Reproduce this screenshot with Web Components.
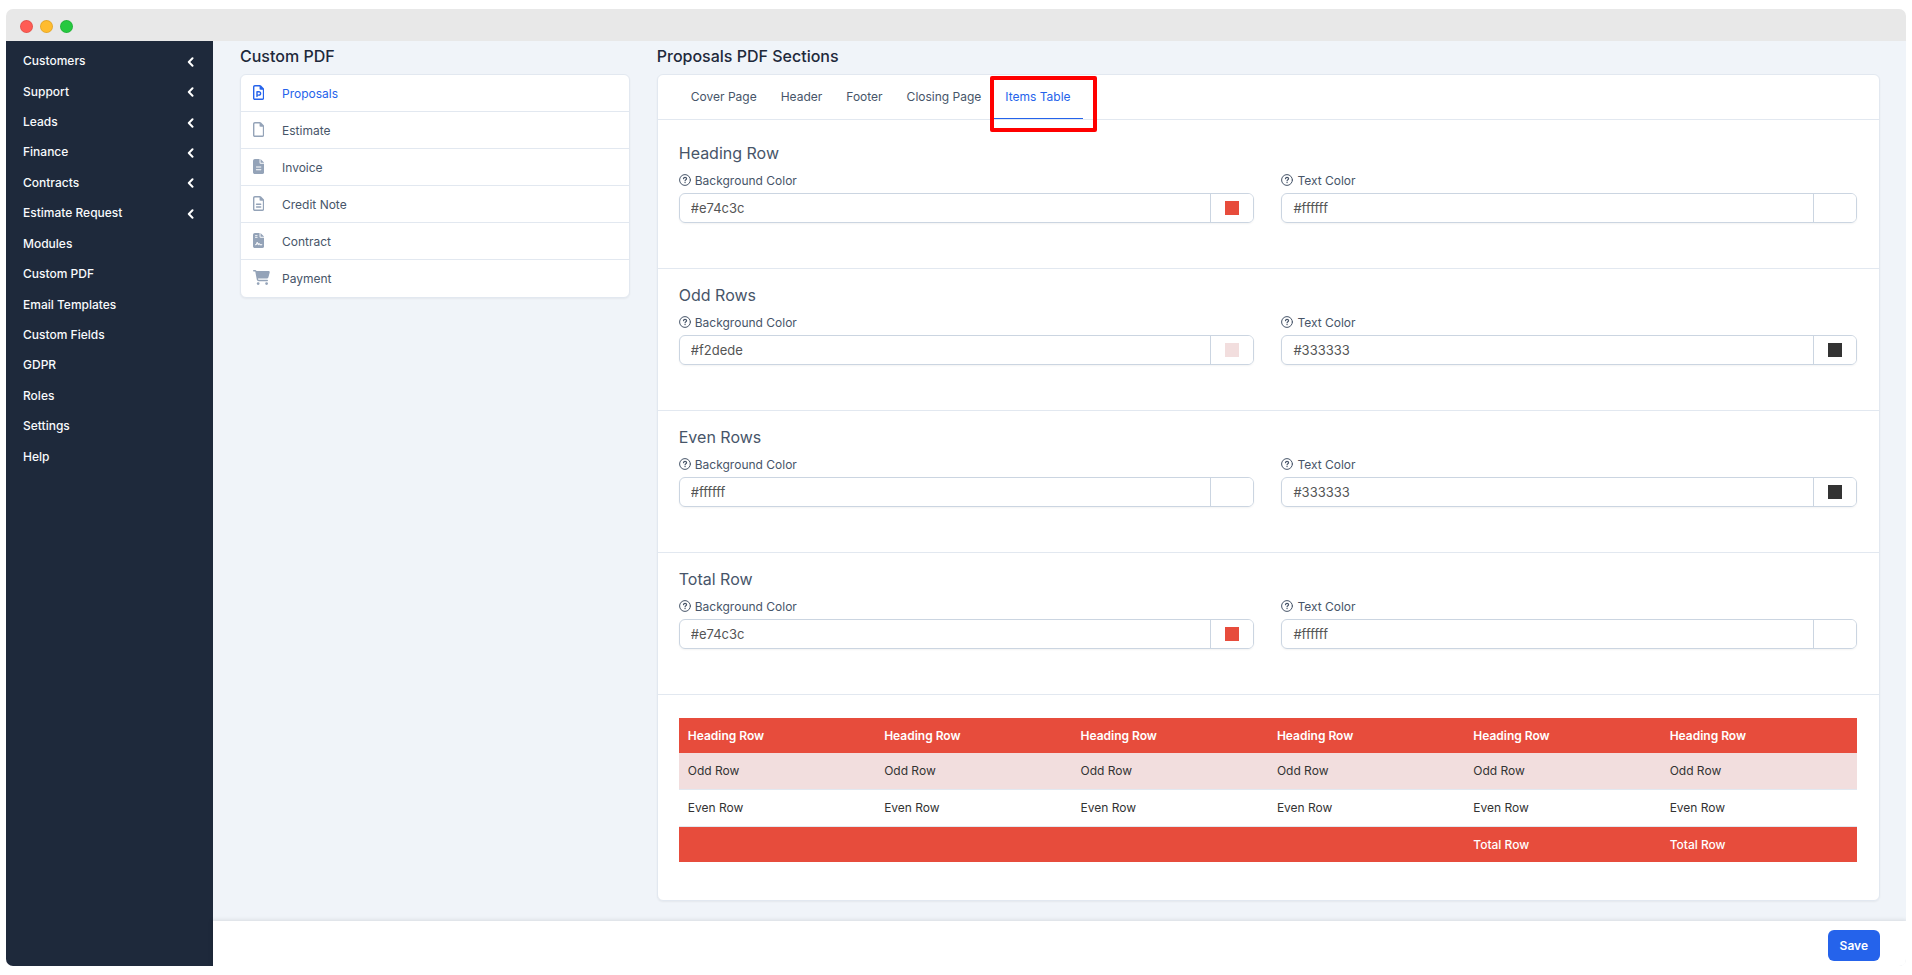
<!DOCTYPE html>
<html lang="en">
<head>
<meta charset="utf-8">
<meta name="viewport" content="width=device-width, initial-scale=1">
<title>Custom PDF</title>
<style>
    body {
        background-color: #fff;
        color: #475569;
        font-family: Inter, 'Open Sans', sans-serif;
        font-size: 12px;
        line-height: 16px;
        margin: 9px 6px;
    }
</style>
</head>
<body>

<app-window>
    <side-menu slot="side"></side-menu>
    <document-list></document-list>
    <pdf-sections></pdf-sections>
    <save-bar slot="bottom"></save-bar>
</app-window>

<script>
class AppWindow extends HTMLElement {

    constructor() {
        super();
        this.shadow = this.attachShadow({ mode: 'open' });
    }

    connectedCallback() {
        this.render();
    }

    render() {

        this.shadow.innerHTML =
        `
        <style>
            :host{
                border-radius: 7px;
                display: flex;
                flex-direction: column;
                min-height: calc(100vh - 18px);
                overflow: hidden;
            }

            header{
                align-items: center;
                background-color: #e8e8e8;
                box-sizing: border-box;
                display: flex;
                gap: 7px;
                height: 32px;
                padding: 2px 14px 0;
            }

            .dot{
                border: 1px solid rgba(0, 0, 0, 0.1);
                border-radius: 50%;
                box-sizing: border-box;
                height: 13px;
                width: 13px;
            }

            .close{ background-color: #ff5c54; }
            .minimize{ background-color: #ffbc2e; }
            .maximize{ background-color: #26c940; }

            .body{
                display: flex;
                flex: 1;
            }

            .content{
                background-color: #f0f4f9;
                display: flex;
                flex: 1;
                flex-direction: column;
                min-width: 0;
            }

            main{
                display: grid;
                flex: 1;
                align-items: start;
                gap: 27px;
                grid-template-columns: minmax(0, 1fr) minmax(0, 1fr) minmax(0, 1fr) minmax(0, 1fr);
                padding: 5px 26px 20px 27px;
            }
        </style>

        <header>
            <span class="dot close"></span>
            <span class="dot minimize"></span>
            <span class="dot maximize"></span>
        </header>
        <div class="body">
            <slot name="side"></slot>
            <div class="content">
                <main><slot></slot></main>
                <slot name="bottom"></slot>
            </div>
        </div>`;
    }
}

customElements.define('app-window', AppWindow);


class SideMenu extends HTMLElement {

    constructor() {
        super();
        this.shadow = this.attachShadow({ mode: 'open' });
        this.items = [
            { name: 'Customers', children: true },
            { name: 'Support', children: true },
            { name: 'Leads', children: true },
            { name: 'Finance', children: true },
            { name: 'Contracts', children: true },
            { name: 'Estimate Request', children: true },
            { name: 'Modules' },
            { name: 'Custom PDF' },
            { name: 'Email Templates' },
            { name: 'Custom Fields' },
            { name: 'GDPR' },
            { name: 'Roles' },
            { name: 'Settings' },
            { name: 'Help' }
        ];
    }

    connectedCallback() {
        this.render();
    }

    render() {

        let arrow = `<svg viewBox="0 0 7 10" aria-hidden="true"><path d="M5.5 1.2 1.8 5l3.7 3.8" /></svg>`;

        this.shadow.innerHTML =
        `
        <style>
            :host{
                background-color: #1e293b;
                box-sizing: border-box;
                display: block;
                flex: none;
                padding: 5px 0;
                width: 207px;
            }

            ul{
                display: grid;
                grid-auto-rows: 1fr;
                height: 426px;
                list-style: none;
                margin: 0;
                padding: 0;
            }

            li{
                display: grid;
            }

            a{
                align-items: center;
                color: #f8fafc;
                display: flex;
                font-weight: 500;
                justify-content: space-between;
                padding: 0 19px 0 17px;
                text-decoration: none;
            }

            svg{
                fill: none;
                height: 10px;
                margin-top: 1px;
                stroke: #fff;
                stroke-linecap: round;
                stroke-linejoin: round;
                stroke-width: 2;
                width: 7px;
            }
        </style>

        <nav>
            <ul>
                ${this.items.map(item => `<li><a href="#">${item.name}${item.children ? arrow : ''}</a></li>`).join('')}
            </ul>
        </nav>`;
    }
}

customElements.define('side-menu', SideMenu);


class DocumentList extends HTMLElement {

    constructor() {
        super();
        this.shadow = this.attachShadow({ mode: 'open' });

        let outline = 'M320 464c8.8 0 16-7.2 16-16V160H256c-17.7 0-32-14.3-32-32V48H64c-8.8 0-16 7.2-16 16V448c0 8.8 7.2 16 16 16H320zM0 64C0 28.7 28.7 0 64 0H229.5c17 0 33.3 6.7 45.3 18.7l90.5 90.5c12 12 18.7 28.3 18.7 45.3V448c0 35.3-28.7 64-64 64H64c-35.3 0-64-28.7-64-64V64z';
        let lines = 'M120 256H264c13.3 0 24 10.7 24 24s-10.7 24-24 24H120c-13.3 0-24-10.7-24-24s10.7-24 24-24zM120 352H264c13.3 0 24 10.7 24 24s-10.7 24-24 24H120c-13.3 0-24-10.7-24-24s10.7-24 24-24z';
        let solid = 'M64 0C28.7 0 0 28.7 0 64V448c0 35.3 28.7 64 64 64H320c35.3 0 64-28.7 64-64V160H256c-17.7 0-32-14.3-32-32V0H64zM256 0V128H384L256 0z';

        this.documents = [
            { name: 'Proposals', active: true, width: 384, path: outline + 'M136 208c-13.3 0-24 10.7-24 24V392c0 13.3 10.7 24 24 24s24-10.7 24-24V368h44c44.2 0 80-35.8 80-80s-35.8-80-80-80H136zm68 112H160V256h44c17.7 0 32 14.3 32 32s-14.3 32-32 32z' },
            { name: 'Estimate', width: 384, path: outline },
            { name: 'Invoice', width: 384, path: solid + 'M112 256H272c8.8 0 16 7.2 16 16s-7.2 16-16 16H112c-8.8 0-16-7.2-16-16s7.2-16 16-16zm0 96H272c8.8 0 16 7.2 16 16s-7.2 16-16 16H112c-8.8 0-16-7.2-16-16s7.2-16 16-16z' },
            { name: 'Credit Note', width: 384, path: outline + lines },
            { name: 'Contract', width: 384, path: solid + 'M80 64h64c8.8 0 16 7.2 16 16s-7.2 16-16 16H80c-8.8 0-16-7.2-16-16s7.2-16 16-16zm0 64h64c8.8 0 16 7.2 16 16s-7.2 16-16 16H80c-8.8 0-16-7.2-16-16s7.2-16 16-16zm54.2 253.8c-6.1 20.3-24.8 34.2-46 34.2H80c-8.8 0-16-7.2-16-16s7.2-16 16-16h8.2c7.1 0 13.3-4.6 15.3-11.4l14.9-49.5c3.4-11.3 13.8-19.1 25.6-19.1s22.2 7.8 25.6 19.1l11.6 38.6c7.4-6.2 16.8-9.7 26.8-9.7c15.9 0 30.4 9 37.5 23.2l4.4 8.8H304c8.8 0 16 7.2 16 16s-7.2 16-16 16H240c-6.1 0-11.6-3.4-14.3-8.8l-8.8-17.7c-1.7-3.4-5.1-5.5-8.8-5.5s-7.2 2.1-8.8 5.5l-8.8 17.7c-2.9 5.9-9.2 9.4-15.7 8.8s-12.1-5.1-13.9-11.3L144 349l-9.8 32.8z' },
            { name: 'Payment', width: 576, path: 'M0 24C0 10.7 10.7 0 24 0H69.5c22 0 41.5 12.8 50.6 32h411c26.3 0 45.5 25 38.6 50.4l-41 152.3c-8.5 31.4-37 53.3-69.5 53.3H170.7l5.4 28.5c2.2 11.3 12.1 19.5 23.6 19.5H488c13.3 0 24 10.7 24 24s-10.7 24-24 24H199.7c-34.6 0-64.3-24.6-70.7-58.5L77.4 54.5c-.7-3.8-4-6.5-7.9-6.5H24C10.7 48 0 37.3 0 24zM128 464a48 48 0 1 1 96 0 48 48 0 1 1-96 0zm336-48a48 48 0 1 1 0 96 48 48 0 1 1 0-96z' }
        ];
    }

    connectedCallback() {
        this.render();
    }

    render() {

        this.shadow.innerHTML =
        `
        <style>
            :host{
                display: block;
            }

            h4{
                color: #1e293b;
                font-size: 16px;
                font-weight: 500;
                line-height: 20px;
                margin: 0 0 8px;
            }

            ul{
                background-color: #fff;
                border: 1px solid #e2e8f0;
                border-radius: 6px;
                box-shadow: 0 1px 2px rgba(0, 0, 0, 0.05);
                list-style: none;
                margin: 0;
                padding: 0 0 1px;
            }

            li + li{
                border-top: 1px solid #e2e8f0;
            }

            a{
                align-items: center;
                box-sizing: border-box;
                color: #475569;
                display: flex;
                height: 36px;
                padding: 1px 12px 0;
                text-decoration: none;
            }

            a.active{
                color: #2563eb;
            }

            .icon{
                color: #94a3b8;
                display: flex;
                flex: none;
                margin-bottom: 2px;
                width: 29px;
            }

            .active .icon{
                color: #2563eb;
            }

            svg{
                fill: currentColor;
                fill-rule: evenodd;
                height: 15px;
            }
        </style>

        <h4>Custom PDF</h4>
        <ul>
            ${this.documents.map(item => `
            <li>
                <a href="#" class="${item.active ? 'active' : ''}">
                    <span class="icon"><svg viewBox="0 0 ${item.width} 512" aria-hidden="true"><path d="${item.path}" /></svg></span>
                    ${item.name}
                </a>
            </li>`).join('')}
        </ul>`;
    }
}

customElements.define('document-list', DocumentList);


class PdfSections extends HTMLElement {

    constructor() {
        super();
        this.shadow = this.attachShadow({ mode: 'open' });
        this.tabs = ['Cover Page', 'Header', 'Footer', 'Closing Page', 'Items Table'];
    }

    connectedCallback() {
        this.render();
    }

    render() {

        this.shadow.innerHTML =
        `
        <style>
            :host{
                display: block;
                grid-column: span 3;
            }

            h4{
                color: #1e293b;
                font-size: 16px;
                font-weight: 500;
                line-height: 20px;
                margin: 0 0 8px;
            }

            .panel{
                background-color: #fff;
                border: 1px solid #e2e8f0;
                border-radius: 6px;
                box-shadow: 0 1px 2px rgba(0, 0, 0, 0.05);
            }

            nav{
                border-bottom: 1px solid #e2e8f0;
                display: flex;
                padding: 0 21px;
            }

            nav a{
                border-bottom: 1px solid transparent;
                box-sizing: border-box;
                color: #475569;
                height: 44px;
                line-height: 43px;
                padding: 0 12px;
                position: relative;
                text-decoration: none;
            }

            nav a.active{
                border-color: #2563eb;
                color: #2563eb;
            }

            /* marks the tab that is being explained */
            nav a.active::after{
                border: 4px solid #f00;
                border-radius: 2px;
                content: '';
                inset: 1px -14px -14px -3px;
                position: absolute;
            }
        </style>

        <h4>Proposals PDF Sections</h4>
        <div class="panel">
            <nav>
                ${this.tabs.map(tab => `<a href="#" class="${tab == 'Items Table' ? 'active' : ''}">${tab}</a>`).join('')}
            </nav>
            <row-colors name="Heading Row" background="#e74c3c" text="#ffffff" first></row-colors>
            <row-colors name="Odd Rows" background="#f2dede" text="#333333"></row-colors>
            <row-colors name="Even Rows" background="#ffffff" text="#333333"></row-colors>
            <row-colors name="Total Row" background="#e74c3c" text="#ffffff"></row-colors>
            <items-preview></items-preview>
        </div>`;
    }
}

customElements.define('pdf-sections', PdfSections);


class RowColors extends HTMLElement {

    constructor() {
        super();
        this.shadow = this.attachShadow({ mode: 'open' });
    }

    connectedCallback() {
        this.render();
    }

    render() {

        this.shadow.innerHTML =
        `
        <style>
            :host{
                border-bottom: 1px solid #e2e8f0;
                display: block;
                padding: 16px 22px 45px 21px;
            }

            :host([first]){
                padding-top: 23px;
            }

            h4{
                font-size: 16px;
                font-weight: 400;
                line-height: 20px;
                margin: 0 0 10px;
            }

            .fields{
                display: grid;
                gap: 27px;
                grid-template-columns: 1fr 1fr;
            }
        </style>

        <h4>${this.getAttribute('name')}</h4>
        <div class="fields">
            <color-field value="${this.getAttribute('background')}">Background Color</color-field>
            <color-field value="${this.getAttribute('text')}">Text Color</color-field>
        </div>`;
    }
}

customElements.define('row-colors', RowColors);


class ColorField extends HTMLElement {

    constructor() {
        super();
        this.shadow = this.attachShadow({ mode: 'open' });
    }

    connectedCallback() {

        this.render();

        let input = this.shadow.querySelector('input');

        input.addEventListener('input', () => {
            this.shadow.querySelector('.swatch').style.backgroundColor = input.value;
        });
    }

    render() {

        let value = this.getAttribute('value');

        this.shadow.innerHTML =
        `
        <style>
            :host{
                display: block;
                min-width: 0;
            }

            label{
                align-items: center;
                display: flex;
                gap: 4px;
                margin-bottom: 4px;
            }

            svg{
                fill: none;
                height: 12px;
                margin-bottom: 2px;
                stroke: currentColor;
                stroke-linecap: round;
                stroke-linejoin: round;
                width: 12px;
            }

            .group{
                border: 1px solid #cbd5e1;
                border-radius: 6px;
                box-shadow: 0 1px 2px rgba(0, 0, 0, 0.05);
                display: flex;
                height: 28px;
                overflow: hidden;
            }

            input{
                background: none;
                border: 0;
                color: #555;
                flex: 1;
                font: inherit;
                font-size: 13px;
                min-width: 0;
                outline: 0;
                padding: 0 11px 1px;
            }

            button{
                align-items: center;
                background-color: #fff;
                border: 0;
                border-left: 1px solid #cbd5e1;
                display: flex;
                justify-content: center;
                padding: 0;
                width: 43px;
            }

            .swatch{
                height: 14px;
                width: 14px;
            }
        </style>

        <label for="color">
            <svg viewBox="0 0 12 12" aria-hidden="true">
                <circle cx="6" cy="6" r="5.4" />
                <path d="M4.5 4.6c.1-.8.7-1.2 1.5-1.2.9 0 1.6.5 1.6 1.3 0 1-1.5 1-1.5 2" stroke-width="1.2" />
                <path d="M6.05 8.5v.1" stroke-width="1.3" />
            </svg>
            <span><slot></slot></span>
        </label>
        <div class="group">
            <input type="text" id="color" value="${value}">
            <button type="button" aria-label="Pick a color"><span class="swatch" style="background-color: ${value}"></span></button>
        </div>`;
    }
}

customElements.define('color-field', ColorField);


class ItemsPreview extends HTMLElement {

    constructor() {
        super();
        this.shadow = this.attachShadow({ mode: 'open' });
    }

    connectedCallback() {
        this.render();
    }

    cells(tag, texts) {
        return texts.map(text => `<${tag}>${text}</${tag}>`).join('');
    }

    render() {

        this.shadow.innerHTML =
        `
        <style>
            :host{
                display: block;
                padding: 23px 22px 38px 21px;
            }

            table{
                border-spacing: 0;
                table-layout: fixed;
                width: 100%;
            }

            th, td{
                box-sizing: border-box;
                color: #333;
                font-weight: 400;
                height: 37px;
                padding: 0 9px;
                text-align: left;
            }

            th{
                color: #fff;
                font-weight: 600;
            }

            thead tr, tfoot tr{
                background-color: #e74c3c;
            }

            thead th, tfoot td{
                height: 35px;
            }

            tbody td{
                border-bottom: 1px solid #e2e8f0;
            }

            tbody tr:nth-child(odd){
                background-color: #f2dede;
            }

            tfoot td{
                color: #fff;
                font-weight: 500;
            }
        </style>

        <table>
            <thead>
                <tr>${this.cells('th', Array(6).fill('Heading Row'))}</tr>
            </thead>
            <tbody>
                <tr>${this.cells('td', Array(6).fill('Odd Row'))}</tr>
                <tr>${this.cells('td', Array(6).fill('Even Row'))}</tr>
            </tbody>
            <tfoot>
                <tr>${this.cells('td', ['', '', '', '', 'Total Row', 'Total Row'])}</tr>
            </tfoot>
        </table>`;
    }
}

customElements.define('items-preview', ItemsPreview);


class SaveBar extends HTMLElement {

    constructor() {
        super();
        this.shadow = this.attachShadow({ mode: 'open' });
    }

    connectedCallback() {
        this.render();
    }

    render() {

        this.shadow.innerHTML =
        `
        <style>
            :host{
                background-color: #fff;
                box-shadow: 0 0 4px 1px rgba(0, 0, 0, 0.1);
                display: flex;
                justify-content: flex-end;
                padding: 9px 26px 5px;
            }

            button{
                background-color: #2563eb;
                border: 0;
                border-radius: 6px;
                color: #fff;
                font: inherit;
                font-weight: 600;
                height: 31px;
                padding: 0 12px;
            }
        </style>

        <button type="submit">Save</button>`;
    }
}

customElements.define('save-bar', SaveBar);
</script>
</body>
</html>
